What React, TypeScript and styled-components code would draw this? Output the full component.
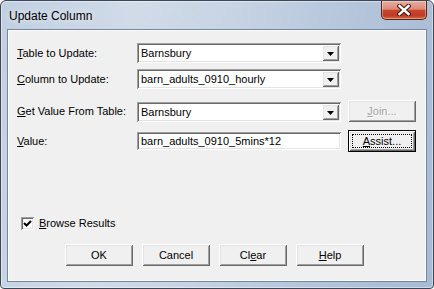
import React from "react";
import styled, { createGlobalStyle, css } from "styled-components";

const GlobalStyle = createGlobalStyle`
  html, body { margin: 0; padding: 0; background: #ffffff; }
  body { width: 434px; height: 289px; overflow: hidden; }
  * { box-sizing: border-box; }
`;

const raised = css`
  background: #f0f0f0;
  box-shadow: inset 1px 1px 0 #ffffff, inset -1px -1px 0 #696969,
    inset 2px 2px 0 #e3e3e3, inset -2px -2px 0 #a0a0a0;
`;

const sunken = css`
  background: #ffffff;
  box-shadow: inset 1px 1px 0 #a0a0a0, inset -1px -1px 0 #ffffff,
    inset 2px 2px 0 #696969, inset -2px -2px 0 #e3e3e3;
`;

const Window = styled.div`
  width: 434px;
  height: 289px;
  display: flex;
  flex-direction: column;
  border: 1px solid #3c4656;
  border-radius: 6px 6px 4px 4px;
  background: linear-gradient(
    100deg,
    #c1cfe1 0%,
    #d1dbe8 28%,
    #c8d4e4 48%,
    #b8c8dd 68%,
    #a6bad3 100%
  );
  box-shadow: inset 0 0 0 1px rgba(255, 255, 255, 0.45);
  font-family: "Liberation Sans", Arial, sans-serif;
  font-size: 11px;
  color: #000;
  overflow: hidden;
`;

const TitleBar = styled.div`
  height: 28px;
  flex: none;
  display: flex;
  justify-content: space-between;
  align-items: flex-start;
  padding: 0 6px 0 8px;
`;

const Title = styled.div`
  font-family: "Liberation Sans", Arial, sans-serif;
  font-size: 12px;
  line-height: 14px;
  padding-top: 8px;
  color: #000;
  text-shadow: 0 0 6px rgba(255, 255, 255, 0.9);
`;

const CloseButton = styled.div`
  width: 46px;
  height: 19px;
  border: 1px solid #5b2219;
  border-top: none;
  border-radius: 0 0 5px 5px;
  background: linear-gradient(
    180deg,
    #e8ab9d 0%,
    #dc8b79 45%,
    #c7452f 52%,
    #c03a24 80%,
    #d2683f 100%
  );
  box-shadow: inset 0 0 0 1px rgba(255, 255, 255, 0.35);
  display: flex;
  align-items: center;
  justify-content: center;
`;

const Client = styled.div`
  flex: 1;
  margin: 0 6px 6px 6px;
  border: 1px solid #7587a0;
  background: #f0f0f0;
  box-shadow: inset 0 0 0 1px #fbfbfb;
  padding: 13px 9px 0 9px;
  display: flex;
  flex-direction: column;
`;

const FormGrid = styled.div`
  display: grid;
  grid-template-columns: 113px 204px 68px;
  column-gap: 7px;
  align-items: center;
`;

const Row = styled.div<{ $mt: number }>`
  display: contents;
  & > * {
    margin-top: ${(p) => p.$mt}px;
  }
`;

const Label = styled.div<{ $self?: string }>`
  line-height: 13px;
  white-space: nowrap;
  align-self: ${(p) => p.$self || "center"};
`;

const Key = styled.span`
  text-decoration: underline;
  text-underline-offset: 1px;
`;

const Combo = styled.div<{ $self?: string }>`
  ${sunken};
  height: 20px;
  padding: 2px;
  display: flex;
  align-items: stretch;
  align-self: ${(p) => p.$self || "center"};
`;

const ComboText = styled.div`
  flex: 1;
  padding-left: 2px;
  line-height: 16px;
  white-space: nowrap;
  overflow: hidden;
`;

const ArrowButton = styled.div`
  ${raised};
  width: 17px;
  display: flex;
  align-items: center;
  justify-content: center;
  padding-top: 1px;
`;

const TextBox = styled.div`
  ${sunken};
  height: 18px;
  padding: 0 4px;
  line-height: 18px;
  white-space: nowrap;
  overflow: hidden;
`;

const PushButton = styled.div<{ $disabled?: boolean; $default?: boolean; $self?: string }>`
  ${raised};
  position: relative;
  height: 22px;
  display: flex;
  align-items: center;
  justify-content: center;
  line-height: 13px;
  align-self: ${(p) => p.$self || "center"};
  ${(p) =>
    p.$disabled &&
    css`
      color: #a0a0a0;
      text-shadow: 1px 1px 0 #ffffff;
    `}
  ${(p) =>
    p.$default &&
    css`
      box-shadow: inset 0 0 0 1px #000000, inset 2px 2px 0 #ffffff,
        inset -2px -2px 0 #696969, inset 3px 3px 0 #e3e3e3,
        inset -3px -3px 0 #a0a0a0;
      &::after {
        content: "";
        position: absolute;
        inset: 4px;
        border: 1px dotted #000;
      }
    `}
`;

const CheckRow = styled.div`
  margin: 65px 0 0 4px;
  display: flex;
  align-items: center;
  gap: 5px;
  height: 13px;
`;

const CheckBox = styled.div`
  ${sunken};
  width: 13px;
  height: 13px;
  display: flex;
  align-items: center;
  justify-content: center;
`;

const ButtonRow = styled.div`
  margin: 14px 0 0 48px;
  display: flex;
  gap: 9px;
`;

const DialogButton = styled(PushButton)`
  width: 68px;
`;

const Arrow = () => (
  <svg width="7" height="4" viewBox="0 0 7 4">
    <path d="M0 0 H7 L3.5 4 Z" fill="#000" />
  </svg>
);

const DropCombo: React.FC<{ value: string; self?: string }> = ({ value, self }) => (
  <Combo $self={self}>
    <ComboText>{value}</ComboText>
    <ArrowButton>
      <Arrow />
    </ArrowButton>
  </Combo>
);

export default function App() {
  return (
    <>
      <GlobalStyle />
      <Window>
        <TitleBar>
          <Title>Update Column</Title>
          <CloseButton>
            <svg width="14" height="12" viewBox="0 0 14 12">
              <path
                d="M2.5 2 L11.5 10 M11.5 2 L2.5 10"
                stroke="#3e1710"
                strokeWidth="4.4"
                strokeLinecap="square"
              />
              <path
                d="M2.5 2 L11.5 10 M11.5 2 L2.5 10"
                stroke="#ffffff"
                strokeWidth="2.4"
                strokeLinecap="square"
              />
            </svg>
          </CloseButton>
        </TitleBar>
        <Client>
          <FormGrid>
            <Row $mt={0}>
              <Label>
                <Key>T</Key>able to Update:
              </Label>
              <DropCombo value="Barnsbury" />
              <div />
            </Row>
            <Row $mt={6}>
              <Label>
                <Key>C</Key>olumn to Update:
              </Label>
              <DropCombo value="barn_adults_0910_hourly" />
              <div />
            </Row>
            <Row $mt={11}>
              <Label>
                <Key>G</Key>et Value From Table:
              </Label>
              <DropCombo value="Barnsbury" self="end" />
              <PushButton $disabled $self="start">
                <span>
                  <Key>J</Key>oin...
                </span>
              </PushButton>
            </Row>
            <Row $mt={8}>
              <Label>
                <Key>V</Key>alue:
              </Label>
              <TextBox>barn_adults_0910_5mins*12</TextBox>
              <PushButton $default>
                <span>
                  <Key>A</Key>ssist...
                </span>
              </PushButton>
            </Row>
          </FormGrid>
          <CheckRow>
            <CheckBox>
              <svg width="9" height="9" viewBox="0 0 9 9">
                <path d="M1 4 L3.5 6.5 L8 2" stroke="#000" strokeWidth="2" fill="none" />
              </svg>
            </CheckBox>
            <Label>
              <Key>B</Key>rowse Results
            </Label>
          </CheckRow>
          <ButtonRow>
            <DialogButton>OK</DialogButton>
            <DialogButton>Cancel</DialogButton>
            <DialogButton>
              <span>
                Cl<Key>e</Key>ar
              </span>
            </DialogButton>
            <DialogButton>
              <span>
                <Key>H</Key>elp
              </span>
            </DialogButton>
          </ButtonRow>
        </Client>
      </Window>
    </>
  );
}
